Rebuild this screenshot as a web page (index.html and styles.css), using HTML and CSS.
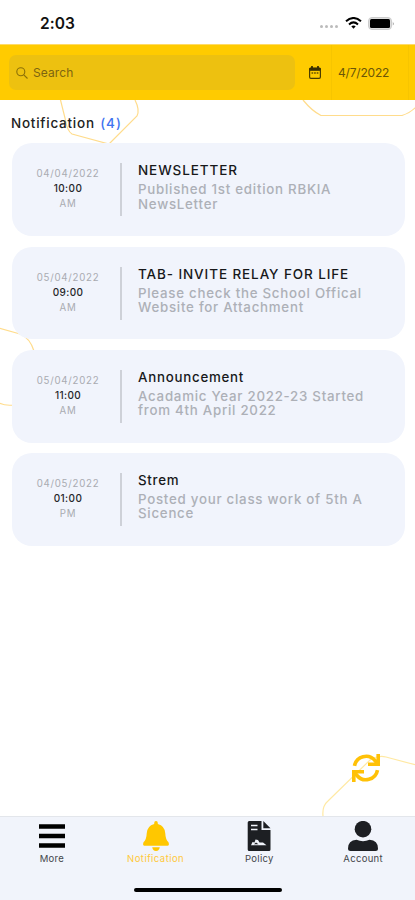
FILE: index.html
```html
<!DOCTYPE html>
<html lang="en">
<head>
<meta charset="utf-8">
<meta name="viewport" content="width=device-width, initial-scale=1">
<title>Notification</title>
<link rel="stylesheet" href="styles.css">
</head>
<body>
<div class="app">
  <svg class="decor" viewBox="0 0 415 900" fill="none" stroke="#ffdc8c" stroke-width="1.2">
    <path d="M60 98 L65 118 Q67 131 72 134 L109 144 L137 116 Q140 110 135 100"/>
    <path d="M303 100 Q312 111 321 115.500 H402 Q410 113 416 107"/>
    <path d="M-1 328 L20 334 Q30 338 34 351"/>
    <path d="M-1 403 Q5 406 14 405"/>
    <path d="M323 816 Q322 806 328 801 L370 760 Q378 755 386 757 L416 765" stroke="#ffe9a3"/>
  </svg>

  <header class="status">
    <span class="clock">2:03</span>
    <span class="dots"><i></i><i></i><i></i><i></i></span>
    <svg class="wifi" width="17" height="12" viewBox="0 0 17 12" fill="none" stroke="#000" stroke-width="2">
      <path d="M1 4.300Q8.500-2.300 16 4.300M4 7.400Q8.500 3.400 13 7.400"/>
      <path d="M6.300 9.300Q8.500 7.500 10.700 9.300L8.500 11.700Z" fill="#000" stroke="none"/>
    </svg>
    <svg class="battery" width="27" height="13" viewBox="0 0 27 13">
      <rect x=".5" y=".5" width="23" height="12" rx="3.500" fill="#ddd" stroke="#ccc"/>
      <rect x="2" y="2" width="20" height="9" rx="1.500" fill="#000"/>
      <path d="M24.800 4.500Q26.600 6.500 24.800 8.500Z" fill="#999"/>
    </svg>
  </header>

  <div class="toolbar">
    <div class="search">
      <svg width="12" height="12" viewBox="0 0 12 12" fill="none" stroke="#8a6f08" stroke-width="1.100"><circle cx="4.800" cy="4.800" r="4"/><path d="M7.800 7.800L11.500 11.500"/></svg>
      <span>Search</span>
    </div>
    <svg class="calendar" width="12" height="13" viewBox="0 0 12 13">
      <path d="M3 0V3M9 0V3" stroke="#2b2300" stroke-width="1.600"/>
      <path d="M0 4.800V3Q0 1.500 1.500 1.500H10.500Q12 1.500 12 3V4.800Z" fill="#2b2300"/>
      <rect x=".6" y="3" width="10.800" height="9.400" rx="1.300" fill="none" stroke="#4a3c00" stroke-width="1.200"/>
      <path d="M2.500 7H9.500" stroke="#665200" stroke-width="1.500" stroke-dasharray="1.700 .9"/>
    </svg>
    <div class="date">4/7/2022</div>
  </div>

  <h1 class="heading">Notification <span>(4)</span></h1>

  <main class="list">
    <article class="card">
      <div class="when"><span>04/04/2022</span><b>10:00</b><span>AM</span></div>
      <div class="what"><h2 class="caps">NEWSLETTER</h2><p>Published 1st edition RBKIA<br>NewsLetter</p></div>
    </article>
    <article class="card">
      <div class="when"><span>05/04/2022</span><b>09:00</b><span>AM</span></div>
      <div class="what"><h2 class="caps">TAB- INVITE RELAY FOR LIFE</h2><p>Please check the School Offical<br>Website for Attachment</p></div>
    </article>
    <article class="card">
      <div class="when"><span>05/04/2022</span><b>11:00</b><span>AM</span></div>
      <div class="what"><h2>Announcement</h2><p>Acadamic Year 2022-23 Started<br>from 4th April 2022</p></div>
    </article>
    <article class="card">
      <div class="when"><span>04/05/2022</span><b>01:00</b><span>PM</span></div>
      <div class="what"><h2>Strem</h2><p>Posted your class work of 5th A<br>Sicence</p></div>
    </article>
  </main>

  <div class="refresh">
    <svg width="28" height="28" viewBox="0 0 28 28" fill="none" stroke="#ffc107" stroke-width="3.600">
      <path d="M2.500 11.800A11.700 11.700 0 0 1 23 6.500L25 9"/>
      <path d="M26.200 0V10.200H16"/>
      <path d="M25.500 16.200A11.700 11.700 0 0 1 5 21.500L3 19"/>
      <path d="M1.800 28V17.800H12"/>
    </svg>
  </div>

  <nav class="tabs">
    <div class="tab">
      <svg width="30" height="30" viewBox="0 0 30 30"><path d="M2 5.500H28M2 15H28M2 24.500H28" stroke="#000" stroke-width="4.400"/></svg>
      <span>More</span>
    </div>
    <div class="tab active">
      <svg width="30" height="30" viewBox="0 0 30 30" fill="#ffc700"><path d="M15 0Q16.800 0 16.800 2V3Q24 5 24.300 12.500Q24.500 18.500 27.500 21.200Q28.700 24.500 26.500 24.800H3.500Q1.300 24.500 2.500 21.200Q5.500 18.500 5.700 12.500Q6 5 13.200 3V2Q13.200 0 15 0Z"/><path d="M11.200 26.300H18.800Q18.300 30 15 30T11.200 26.300Z"/></svg>
      <span>Notification</span>
    </div>
    <div class="tab">
      <svg width="30" height="30" viewBox="0 0 30 30"><path d="M5.200 0H17.500V9H26.500V28.500Q26.500 30 25 30H5.200Q3.700 30 3.700 28.500V1.500Q3.700 0 5.200 0Z" fill="#1d1f23"/><path d="M19.300 0L26.500 7.200H19.300Z" fill="#1d1f23"/><path d="M7 4.500H13.500M7 8.500H13.500" stroke="#f1f4fb" stroke-width="1.700"/><path d="M7 24.300L8.500 21L10.500 21.500L11.500 18.500L14 19L15.500 21.500L19 21.500L22.500 24.300Z" fill="#f1f4fb"/><path d="M10 23.200L12 21.500L14.500 23.200Z" fill="#1d1f23"/></svg>
      <span>Policy</span>
    </div>
    <div class="tab">
      <svg width="30" height="30" viewBox="0 0 30 30" fill="#1d1f23"><circle cx="15" cy="8.200" r="8.300"/><path d="M8.500 18.800Q15 21.500 21.500 18.800Q30 19.500 30 27.500Q30 30 27.500 30H2.500Q0 30 0 27.500Q0 19.500 8.500 18.800Z"/></svg>
      <span>Account</span>
    </div>
    <div class="home"></div>
  </nav>
</div>
</body>
</html>
```
FILE: styles.css
```css
* { box-sizing: border-box; }
body { margin: 0; background: #fff; font-family: Inter, "Liberation Sans", sans-serif; }
.app { position: relative; width: 415px; height: 900px; overflow: hidden; display: flex; flex-direction: column; isolation: isolate; }
.decor { position: absolute; inset: 0; width: 415px; height: 900px; z-index: -1; }

.status { height: 44px; flex: none; display: flex; align-items: center; padding: 2px 20px 0 40px; }
.clock { font-size: 15.500px; font-weight: 600; letter-spacing: .1px; color: #111; flex: 1; }
.dots { display: flex; gap: 2px; margin: 7px 7px 0 0; }
.dots i { width: 3px; height: 3px; border-radius: 50%; background: #bbb; }
.wifi { margin-right: 6px; }

.toolbar { height: 56.400px; flex: none; background: #ffcb00; border-top: 1px solid #ffdb66; display: flex; align-items: center; padding-left: 9px; }
.search { width: 286px; height: 35px; border-radius: 7px; background: #edc110; display: flex; align-items: center; gap: 5px; padding-left: 7px; font-size: 12px; letter-spacing: .1px; color: #7d6510; }
.calendar { margin-left: 14px; }
.date { margin-left: 10px; height: 55px; width: 78px; border-left: 1px solid #f7c500; border-right: 1px solid #f7c500; padding-left: 6px; line-height: 55px; font-size: 12px; letter-spacing: -.2px; color: #6b5608; }

.heading { height: 43px; flex: none; margin: 0; padding: 2px 0 0 11px; font-size: 13.500px; line-height: 42px; font-weight: 500; letter-spacing: .75px; color: #222; white-space: nowrap; }
.heading span { color: #3f74f0; margin-left: 1px; letter-spacing: 1px; }

.list { display: flex; flex-direction: column; gap: 10.600px; padding: 0 10px 0 12px; }
.card { height: 92.700px; border-radius: 20px; background: #f1f4fc; display: flex; align-items: center; }
.when { width: 110px; height: 53px; border-right: 2px solid #ced1d8; display: flex; flex-direction: column; align-items: center; padding: 3px 0 0 4px; font-size: 9.700px; line-height: 15px; letter-spacing: .75px; color: #a9abb1; }
.when b { font-size: 10px; font-weight: 500; letter-spacing: .4px; color: #26272a; }
.what { height: 53px; padding-left: 16px; white-space: nowrap; }
.what h2 { margin: -2px 0 0; font-size: 13.300px; line-height: 18px; font-weight: 500; letter-spacing: .75px; color: #17181a; }
.what h2.caps { font-size: 13.500px; letter-spacing: .9px; }
.what p { margin: 3px 0 0; font-size: 13.300px; line-height: 14.300px; font-weight: 500; letter-spacing: .74px; color: #adb0b7; }

.refresh { margin: auto 0 34px 352px; height: 28px; }

.tabs { height: 84px; flex: none; background: #f1f4fb; border-top: 1px solid #e3e6eb; display: grid; grid-template-columns: repeat(4, 103.750px); grid-template-rows: 66px 1fr; }
.tab { display: flex; flex-direction: column; align-items: center; padding-top: 4px; font-size: 9.500px; line-height: 15px; letter-spacing: .3px; color: #44464b; }
.tab svg { display: block; }
.active { color: #ffc83a; letter-spacing: .45px; }
.home { grid-column: 1 / -1; justify-self: center; width: 148px; height: 4px; margin-top: 5px; border-radius: 2px; background: #000; }
```
